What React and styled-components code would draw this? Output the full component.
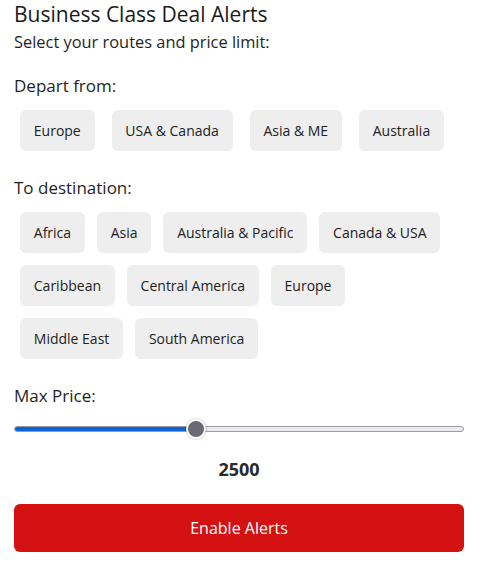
import React from "react";
import styled, { createGlobalStyle } from "styled-components";

const Global = createGlobalStyle`
  html, body { margin: 0; padding: 0; background: #ffffff; }
  body { font-family: "Open Sans", "Noto Sans", sans-serif; color: #1f1f1f; }
`;

const Page = styled.div`
  padding: 0 19px 0 14px;
  display: flex;
  flex-direction: column;
`;

const Title = styled.h1`
  margin: 0;
  font-size: 21px;
  line-height: 28px;
  font-weight: 400;
  color: #1a1a1a;
`;

const Subtitle = styled.p`
  margin: 3px 0 0;
  font-size: 16.4px;
  line-height: 22px;
`;

const Label = styled.div`
  margin-top: ${(p) => p.$top}px;
  font-size: 17px;
  line-height: 23px;
`;

const ChipGroup = styled.div`
  display: flex;
  flex-wrap: wrap;
  column-gap: ${(p) => p.$gap}px;
  row-gap: 12px;
  margin-top: 13px;
  padding: 0 6px;
`;

const Chip = styled.button`
  font-family: inherit;
  font-size: 14px;
  line-height: 19px;
  color: #222;
  background: #eeeeee;
  border: none;
  border-radius: 6px;
  padding: 11px 13.8px;
  cursor: pointer;
`;

const SliderWrap = styled.div`
  margin-top: 12px;
  position: relative;
  height: 20px;
  display: flex;
  align-items: center;
`;

const Track = styled.div`
  width: 100%;
  height: 6px;
  border-radius: 3px;
  background: #ebebf0;
  border: 1px solid #9a9aa2;
  box-sizing: border-box;
  position: relative;
  overflow: hidden;
`;

const Fill = styled.div`
  position: absolute;
  left: -1px;
  top: -1px;
  bottom: -1px;
  background: #0b62da;
  border-radius: 3px 0 0 3px;
`;

const Thumb = styled.div`
  position: absolute;
  top: 0;
  width: 20px;
  height: 20px;
  border-radius: 50%;
  background: #6a6a76;
  border: 2px solid #ffffff;
  box-sizing: border-box;
  box-shadow: 0 0 1px 1px rgba(0, 0, 0, 0.12);
`;

const Value = styled.div`
  margin-top: 18px;
  text-align: center;
  font-size: 18px;
  line-height: 24px;
  font-weight: 700;
  color: #2a2a2a;
`;

const Submit = styled.button`
  margin-top: 23px;
  height: 48px;
  width: 100%;
  border: none;
  border-radius: 6px;
  background: #d41111;
  color: #ffffff;
  font-family: inherit;
  font-size: 16px;
  cursor: pointer;
`;

const departs = ["Europe", "USA & Canada", "Asia & ME", "Australia"];
const dests = [
  "Africa",
  "Asia",
  "Australia & Pacific",
  "Canada & USA",
  "Caribbean",
  "Central America",
  "Europe",
  "Middle East",
  "South America",
];

export default function App() {
  const min = 500;
  const max = 5500;
  const value = 2500;
  const frac = (value - min) / (max - min);
  const thumbLeft = `calc(${frac} * (100% - 20px))`;
  const fillWidth = `calc(${frac} * (100% - 20px) + 10px)`;
  return (
    <>
      <Global />
      <Page>
        <Title>Business Class Deal Alerts</Title>
        <Subtitle>Select your routes and price limit:</Subtitle>
        <Label $top={21}>Depart from:</Label>
        <ChipGroup $gap={17}>
          {departs.map((d) => (
            <Chip key={d}>{d}</Chip>
          ))}
        </ChipGroup>
        <Label $top={25}>To destination:</Label>
        <ChipGroup $gap={12}>
          {dests.map((d) => (
            <Chip key={d}>{d}</Chip>
          ))}
        </ChipGroup>
        <Label $top={25}>Max Price:</Label>
        <SliderWrap>
          <Track>
            <Fill style={{ width: fillWidth }} />
          </Track>
          <Thumb style={{ left: thumbLeft }} />
        </SliderWrap>
        <Value>{value}</Value>
        <Submit>Enable Alerts</Submit>
      </Page>
    </>
  );
}
